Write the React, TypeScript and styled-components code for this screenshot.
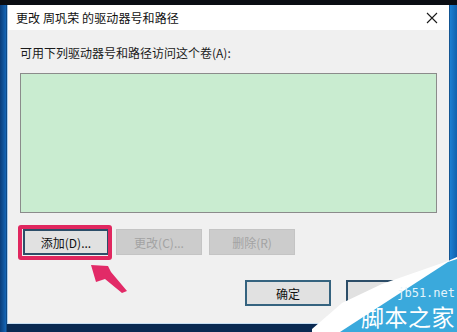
import React from 'react';
import styled, { createGlobalStyle } from 'styled-components';

const GlobalStyle = createGlobalStyle`
  html, body {
    margin: 0;
    padding: 0;
  }
  body {
    font-family: "Noto Sans CJK SC", "Liberation Sans", sans-serif;
    font-size: 12px;
    color: #000;
  }
`;

const Desktop = styled.div`
  position: relative;
  width: 457px;
  height: 332px;
  overflow: hidden;
  box-sizing: border-box;
  border-top: 5px solid #0a0d13;
  background: linear-gradient(
    90deg,
    #0a3d7a 0px,
    #1466b6 6px,
    #0a2a52 7px,
    #0a2a52 449px,
    #1b7fd2 450px,
    #1161ad 457px
  );
`;

const Window = styled.div`
  margin-left: 7px;
  width: 442px;
  height: 319px;
  box-sizing: border-box;
  display: flex;
  flex-direction: column;
  border-left: 1px solid #a9cdee;
  border-bottom: 1px solid #c7dff3;
  background: #f0f0f0;
`;

const TitleBar = styled.div`
  height: 25px;
  flex: none;
  display: flex;
  align-items: center;
  justify-content: space-between;
  padding: 0 9px 0 8px;
  background: #fff;

  .title {
    font-size: 12px;
    color: #111;
    letter-spacing: 0.1px;
    line-height: 20px;
  }
`;

const CloseIcon = styled.svg`
  width: 12px;
  height: 12px;
  margin-right: 2px;
`;

const Body = styled.div`
  flex: 1;
  display: flex;
  flex-direction: column;
  padding: 14px 11px 0 12px;
`;

const Label = styled.div`
  font-size: 12px;
  color: #1a1a1a;
  line-height: 17px;
`;

const ListBox = styled.div`
  margin-top: 12px;
  width: 417px;
  height: 140px;
  box-sizing: border-box;
  border: 1px solid #8b8b8b;
  background: #c9ecd0;
`;

const ButtonRow = styled.div`
  display: flex;
  gap: 7px;
  margin-top: 16px;
  padding-left: 3px;
`;

const Highlight = styled.div`
  position: relative;

  &::after {
    content: '';
    position: absolute;
    left: -5px;
    top: -4px;
    right: -3px;
    bottom: -5px;
    border: 4px solid #e0275f;
    border-radius: 3px;
    pointer-events: none;
  }
`;

const Button = styled.button<{ $disabled?: boolean; $default?: boolean }>`
  width: 86px;
  height: 26px;
  box-sizing: border-box;
  padding: 0;
  font-family: "Noto Sans CJK SC", "Liberation Sans", sans-serif;
  font-size: 12px;
  color: ${(p) => (p.$disabled ? '#a3a3a3' : '#111')};
  background: ${(p) => (p.$disabled ? '#cccccc' : '#e1e1e1')};
  border: ${(p) =>
    p.$default ? '2px solid #35637f' : p.$disabled ? '1px solid #c4c4c4' : '2px solid #2c4d68'};
`;

const Footer = styled.div`
  display: flex;
  justify-content: flex-end;
  gap: 15px;
  margin-top: 25px;
  padding-right: 6px;
`;

const Arrow = styled.svg`
  position: absolute;
  left: 0;
  top: -5px;
  width: 457px;
  height: 332px;
  pointer-events: none;
`;

const Watermark = styled.div`
  position: absolute;
  right: 0;
  bottom: 0;
  width: 145px;
  height: 75px;
  pointer-events: none;

  svg {
    position: absolute;
    left: 0;
    top: 0;
  }

  .site {
    position: absolute;
    right: 2px;
    bottom: 32px;
    font-family: "DejaVu Sans Mono", "Liberation Mono", monospace;
    font-size: 12px;
    line-height: 13px;
    color: #e4f4fb;
  }

  .name {
    position: absolute;
    right: 2px;
    bottom: 3px;
    font-family: "Noto Sans CJK SC", sans-serif;
    font-size: 23px;
    line-height: 26px;
    letter-spacing: 0.5px;
    color: #fff;
  }
`;

const App = () => {
  return (
    <>
      <GlobalStyle />
      <Desktop>
        <Window>
          <TitleBar>
            <span className="title">更改 周巩荣 的驱动器号和路径</span>
            <CloseIcon viewBox="0 0 12 12">
              <path d="M1 1 L11 11 M11 1 L1 11" stroke="#1a1a1a" strokeWidth="1.1" />
            </CloseIcon>
          </TitleBar>
          <Body>
            <Label>可用下列驱动器号和路径访问这个卷(A):</Label>
            <ListBox />
            <ButtonRow>
              <Highlight>
                <Button>添加(D)...</Button>
              </Highlight>
              <Button $disabled>更改(C)...</Button>
              <Button $disabled>删除(R)</Button>
            </ButtonRow>
            <Footer>
              <Button $default>确定</Button>
              <Button aria-label="取消" />
            </Footer>
          </Body>
        </Window>

        <Arrow viewBox="0 0 457 332">
          <polygon
            points="91,265 108,266 111,272 127,291 122,293 105,279 96,282"
            fill="#e22a67"
          />
        </Arrow>

        <Watermark>
          <svg viewBox="0 0 145 75" width="145" height="75">
            <polygon points="0,72 30,46 70,27 136,4 145,0 145,75 0,75" fill="#ffffff" />
            <polygon points="28,75 136,5 145,2 145,75" fill="#3aa9dc" />
          </svg>
          <span className="site">jb51.net</span>
          <span className="name">脚本之家</span>
        </Watermark>
      </Desktop>
    </>
  );
};

export default App;
